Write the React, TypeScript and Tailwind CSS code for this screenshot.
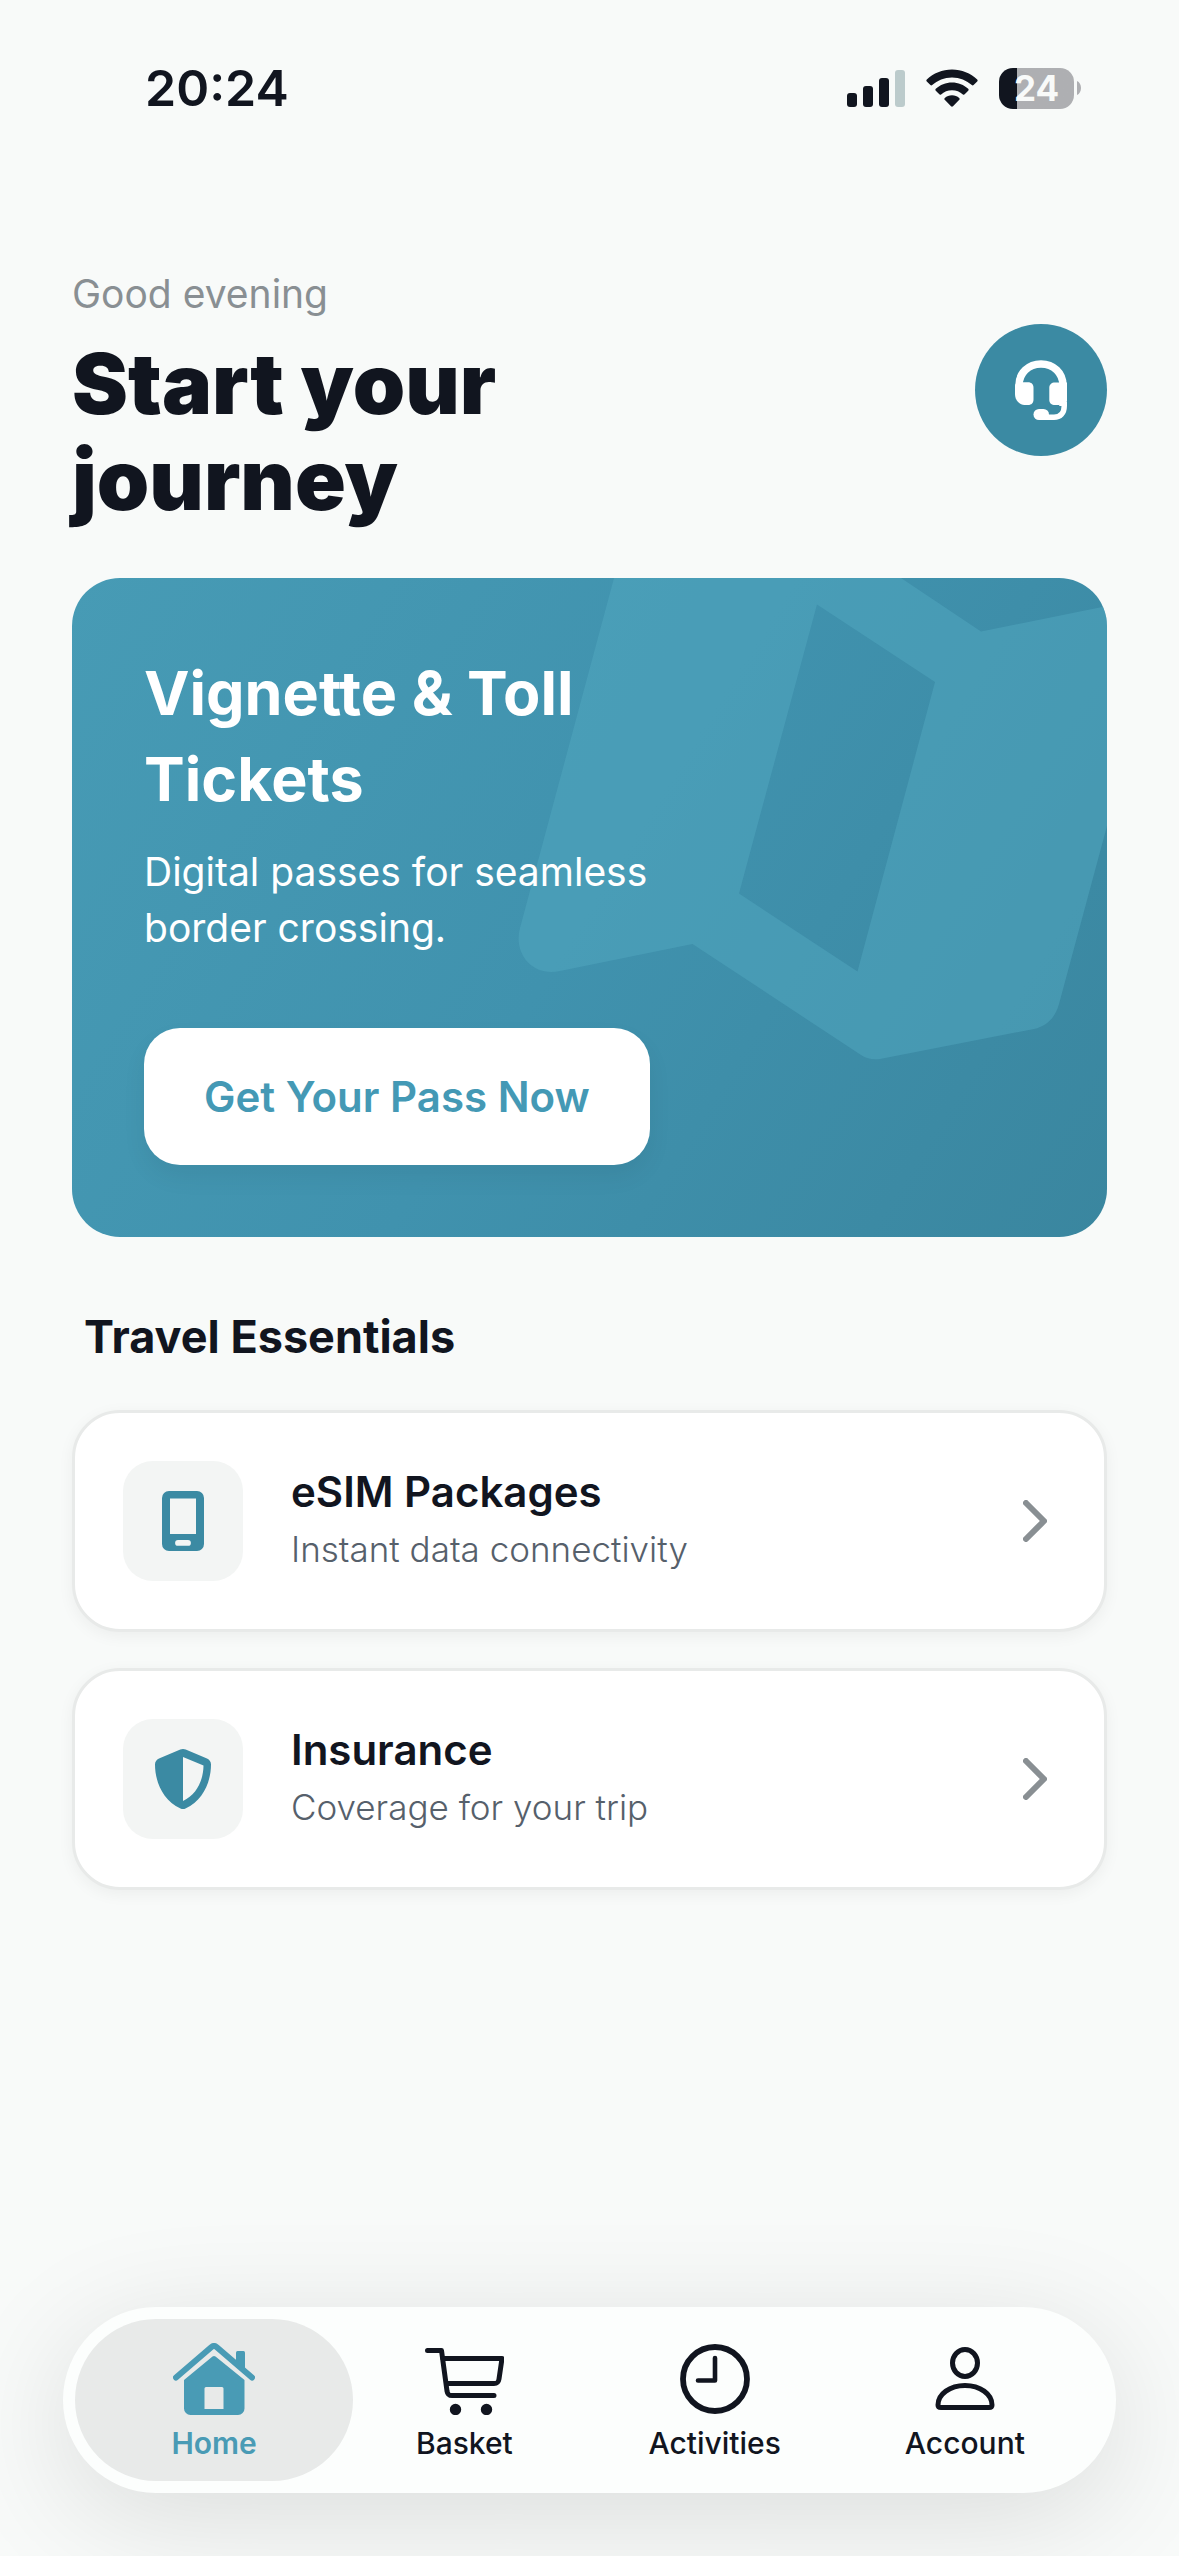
const serviceCards = [
  { title: "eSIM Packages", text: "Instant data connectivity", icon: PhoneIcon },
  { title: "Insurance", text: "Coverage for your trip", icon: ShieldIcon },
]

const tabs = [
  { label: "Home", icon: HomeIcon, active: true },
  { label: "Basket", icon: BasketIcon, active: false },
  { label: "Activities", icon: ClockIcon, active: false },
  { label: "Account", icon: AccountIcon, active: false },
]

function SignalIcon() {
  return (
    <svg viewBox="0 0 58 38" className="h-[38px] w-[58px]" aria-hidden="true">
      <rect x="0" y="24" width="10" height="14" rx="3" fill="#11151f" />
      <rect x="16" y="17" width="10" height="21" rx="3" fill="#11151f" />
      <rect x="32" y="9" width="10" height="29" rx="3" fill="#11151f" />
      <rect x="48" y="1" width="10" height="37" rx="3" fill="#bccbcc" />
    </svg>
  )
}

function WifiIcon() {
  return (
    <svg viewBox="0 0 52 38" className="h-[38px] w-[52px]" fill="#11151f" aria-hidden="true">
      <path d="M26 0.5C16.3 0.5 7.4 4.3 .8 10.4c-.6.6-.6 1.4 0 2l3.6 3.7c.5.5 1.3.5 1.8 0C11.400 11.300 18.300 8.400 26 8.400s14.600 2.900 19.800 7.700c.5.5 1.300.5 1.800 0l3.600-3.700c.6-.6.6-1.400 0-2C44.600 4.300 35.700.5 26 .5Z" />
      <path d="M26 13.500c-6.200 0-11.900 2.400-16.200 6.300-.6.5-.6 1.400 0 1.900l3.500 3.600c.5.5 1.300.5 1.800.1 2.900-2.500 6.700-4.100 10.900-4.100s8 1.600 10.900 4.100c.5.4 1.300.4 1.800-.1l3.500-3.600c.6-.5.6-1.400 0-1.900-4.300-3.900-10-6.300-16.200-6.300Z" />
      <path d="M26 26.300c-2.800 0-5.300 1-7.200 2.600-.6.5-.6 1.300-.1 1.800l6.300 6.500c.6.6 1.400.6 2 0l6.300-6.500c.5-.5.5-1.300-.1-1.800-1.900-1.600-4.400-2.600-7.200-2.600Z" />
    </svg>
  )
}

function Battery() {
  return (
    <div className="flex items-center gap-[3px]">
      <div className="flex h-[41px] w-[75px] items-center justify-center rounded-[14px] bg-linear-to-r from-[#11151f] from-24% to-[#aeafb2] to-24% text-[35px] leading-none font-bold text-[#f8faf9]">
        24
      </div>
      <svg viewBox="0 0 4 14" className="h-[14px] w-[4px]" fill="#aeafb2" aria-hidden="true">
        <path d="M0 0c2.500 1 4 3.800 4 7s-1.500 6-4 7Z" />
      </svg>
    </div>
  )
}

function HeadsetIcon() {
  return (
    <svg viewBox="0 0 52 60" className="h-[60px] w-[52px]" aria-hidden="true">
      <path
        d="M4 28V25.500C4 13 13.500 4 26 4s22 9 22 21.500V46"
        fill="none"
        stroke="#fff"
        strokeWidth="7.500"
      />
      <path d="M49.200 42v4.500c0 6.500-4 10.700-10.200 10.700H25" fill="none" stroke="#fff" strokeWidth="5.500" />
      <path d="M0 26c0-2 1.500-3.700 4-3.700h9c3.500 0 5.500 2.200 5.500 5.500v11.700c0 3.300-2 5.500-5.500 5.500h-2C4.500 45 0 40.500 0 34Z" fill="#fff" />
      <path d="M52 22.500h-12c-3.500 0-5.700 2-5.700 5.300v11.900c0 3.300 2.200 5.300 5.700 5.300h4l8-4Z" fill="#fff" />
      <rect x="18.500" y="49" width="15.500" height="11" rx="5.500" fill="#fff" />
    </svg>
  )
}

function PhoneIcon() {
  return (
    <svg viewBox="0 0 42 60" className="h-[60px] w-[42px]" fill="#3b8aa3" aria-hidden="true">
      <path
        fillRule="evenodd"
        d="M7 0h28a7 7 0 0 1 7 7v46a7 7 0 0 1-7 7H7a7 7 0 0 1-7-7V7a7 7 0 0 1 7-7ZM8 7.500V43h26V7.500ZM16 49a2.900 2.900 0 0 0 0 5.800h10a2.900 2.900 0 0 0 0-5.800Z"
      />
    </svg>
  )
}

function ShieldIcon() {
  return (
    <svg viewBox="0 0 56 60" className="h-[60px] w-14" fill="#3b8aa3" aria-hidden="true">
      <path
        fillRule="evenodd"
        d="M28 0c1 0 1.900.2 2.700.5L52 9.500c2.500 1.100 4 3.300 4 6C56 32 48.500 51.500 30.500 59.400c-1.600.8-3.400.8-5 0C7.500 51.500 0 32 0 15.500c0-2.700 1.500-4.900 4-6L25.300.5C26.100.2 27 0 28 0Zm0 8v44c14-6.500 20.300-21 20.500-35.500Z"
      />
    </svg>
  )
}

function HomeIcon() {
  return (
    <svg viewBox="0 0 82 72" className="h-[72px] w-[82px]" fill="#499bb5" aria-hidden="true">
      <path
        d="M3 34.500 38.500 4a4 4 0 0 1 5 0L79 34.500"
        fill="none"
        stroke="#499bb5"
        strokeWidth="6"
        strokeLinecap="round"
        strokeLinejoin="round"
      />
      <path d="M63 18V9.500A1.500 1.500 0 0 1 64.500 8h6A1.500 1.500 0 0 1 72 9.500V27Z" />
      <path
        fillRule="evenodd"
        d="M39.500 13.500a2.400 2.400 0 0 1 3 0L71.500 37v28.500a6.500 6.500 0 0 1-6.500 6.500H17.500a6.500 6.500 0 0 1-6.500-6.500V37ZM33 44a1.500 1.500 0 0 0-1.500 1.500V66h19V45.500A1.500 1.500 0 0 0 49 44Z"
      />
    </svg>
  )
}

function BasketIcon() {
  return (
    <svg viewBox="0 0 80 72" className="h-[72px] w-20" fill="none" stroke="#11151f" strokeWidth="5" strokeLinecap="round" strokeLinejoin="round" aria-hidden="true">
      <path d="M3.500 7.500h14L23 48c.7 4.300 2.500 4.500 5 4.500h42" />
      <path d="M19 15.500h59L75 36c-.5 3.500-2 4.500-5 4.500H22.500" />
      <circle cx="31.500" cy="66.500" r="3.200" fill="#11151f" />
      <circle cx="62.500" cy="66.500" r="3.200" fill="#11151f" />
    </svg>
  )
}

function ClockIcon() {
  return (
    <svg viewBox="0 0 72 72" className="size-[72px]" fill="none" stroke="#11151f" strokeLinecap="round" strokeLinejoin="round" aria-hidden="true">
      <circle cx="36" cy="36" r="32" strokeWidth="5.800" />
      <path d="M36 15v22.500H19" strokeWidth="4.600" />
    </svg>
  )
}

function AccountIcon() {
  return (
    <svg viewBox="0 0 60 72" className="h-[72px] w-[60px]" fill="none" stroke="#11151f" strokeWidth="5" strokeLinecap="round" strokeLinejoin="round" aria-hidden="true">
      <ellipse cx="30" cy="20" rx="12.500" ry="13.500" />
      <path d="M30 42.500c15 0 27 8.500 27 19.500 0 2-1 2.500-3 2.500H6c-2 0-3-.5-3-2.500 0-11 12-19.500 27-19.500Z" />
    </svg>
  )
}

function ChevronIcon() {
  return (
    <svg viewBox="0 0 24 42" className="h-[42px] w-6" fill="none" stroke="#898f93" strokeWidth="6" strokeLinecap="round" strokeLinejoin="round" aria-hidden="true">
      <path d="M3 3l18 18L3 39" />
    </svg>
  )
}

function StatusBar() {
  return (
    <div className="flex h-44 items-center justify-between pr-[98px] pl-[145px]">
      <span className="text-[50px] leading-none font-semibold">20:24</span>
      <div className="flex items-center gap-[21px]">
        <SignalIcon />
        <WifiIcon />
        <Battery />
      </div>
    </div>
  )
}

export default function App() {
  return (
    <div className="flex min-h-screen flex-col overflow-hidden bg-[#f8faf9] font-['Inter',sans-serif] text-[#11151f]">
      <StatusBar />

      <main className="px-[72px] pt-[76px]">
        <header className="flex items-center justify-between">
          <div>
            <p className="text-[39px] leading-[84px] text-[#898f93]">Good evening</p>
            <h1 className="text-[84px] leading-[96px] font-black">
              Start your
              <br />
              journey
            </h1>
          </div>
          <button aria-label="Support" className="flex size-[132px] items-center justify-center rounded-full bg-[#3b8aa3]">
            <HeadsetIcon />
          </button>
        </header>

        <section className="relative mt-[50px] overflow-hidden rounded-[48px] bg-linear-[122deg] from-[#479bb5] via-[#4092ae] to-[#3a869f] p-[72px] text-white">
          {/* Folded map watermark */}
          <svg viewBox="0 0 600 659" className="absolute top-0 right-0 h-[659px] w-[600px]" aria-hidden="true">
            <path
              fill="#52a8bf"
              fillOpacity="0.5"
              fillRule="evenodd"
              d="M107 0 13 350c-7 26 13 49 40 43l132.500-27L354 477c6 4 12 5 19 4l154-30c13-3 21-11 25-25l48-178V28L474 53.500 394 0ZM310 26.500 428 104l-77.500 289.500L232 315.500Z"
            />
          </svg>
          <div className="relative">
            <h2 className="text-[61px] leading-[86px] font-bold">
              Vignette &amp; Toll
              <br />
              Tickets
            </h2>
            <p className="mt-[22px] text-[39px] leading-[56px]">
              Digital passes for seamless
              <br />
              border crossing.
            </p>
            <button className="mt-[72px] rounded-[36px] bg-white px-[60px] py-10 text-[42px] leading-[57px] font-semibold text-[#4499b5] shadow-[0_12px_24px_rgba(0,0,0,0.06)]">
              Get Your Pass Now
            </button>
          </div>
        </section>

        <h2 className="mt-[70px] px-3 text-[45px] leading-[60px] font-bold">Travel Essentials</h2>
        <div className="mt-[43px] flex flex-col gap-9">
          {serviceCards.map(({ title, text, icon: Icon }) => (
            <a
              key={title}
              href="#"
              className="flex items-center gap-12 rounded-[48px] border-[3px] border-[#e8eae9] bg-white py-12 pr-[57px] pl-12 shadow-[0_4px_16px_rgba(0,0,0,0.05)]"
            >
              <span className="flex size-[120px] items-center justify-center rounded-[30px] bg-[#f3f5f4]">
                <Icon />
              </span>
              <span className="flex flex-1 flex-col gap-1 pb-1">
                <span className="text-[42px] leading-[56px] font-semibold">{title}</span>
                <span className="text-[35px] leading-[50px] font-light text-[#56606b]">{text}</span>
              </span>
              <ChevronIcon />
            </a>
          ))}
        </div>
      </main>

      <nav className="mx-[63px] mt-auto mb-[63px] flex rounded-[93px] bg-[#fcfefd] px-[26px] py-3 shadow-[0_24px_120px_rgba(0,0,0,0.12)]">
        {tabs.map(({ label, icon: Icon, active }) => (
          <a
            key={label}
            href="#"
            className={`-mx-[14px] flex h-[162px] flex-1 flex-col items-center gap-2 rounded-[81px] pt-6 text-[30px] leading-[40px] ${
              active ? "bg-[#e8eae9] font-semibold text-[#499bb5]" : "font-medium"
            }`}
          >
            <Icon />
            {label}
          </a>
        ))}
      </nav>
    </div>
  )
}
